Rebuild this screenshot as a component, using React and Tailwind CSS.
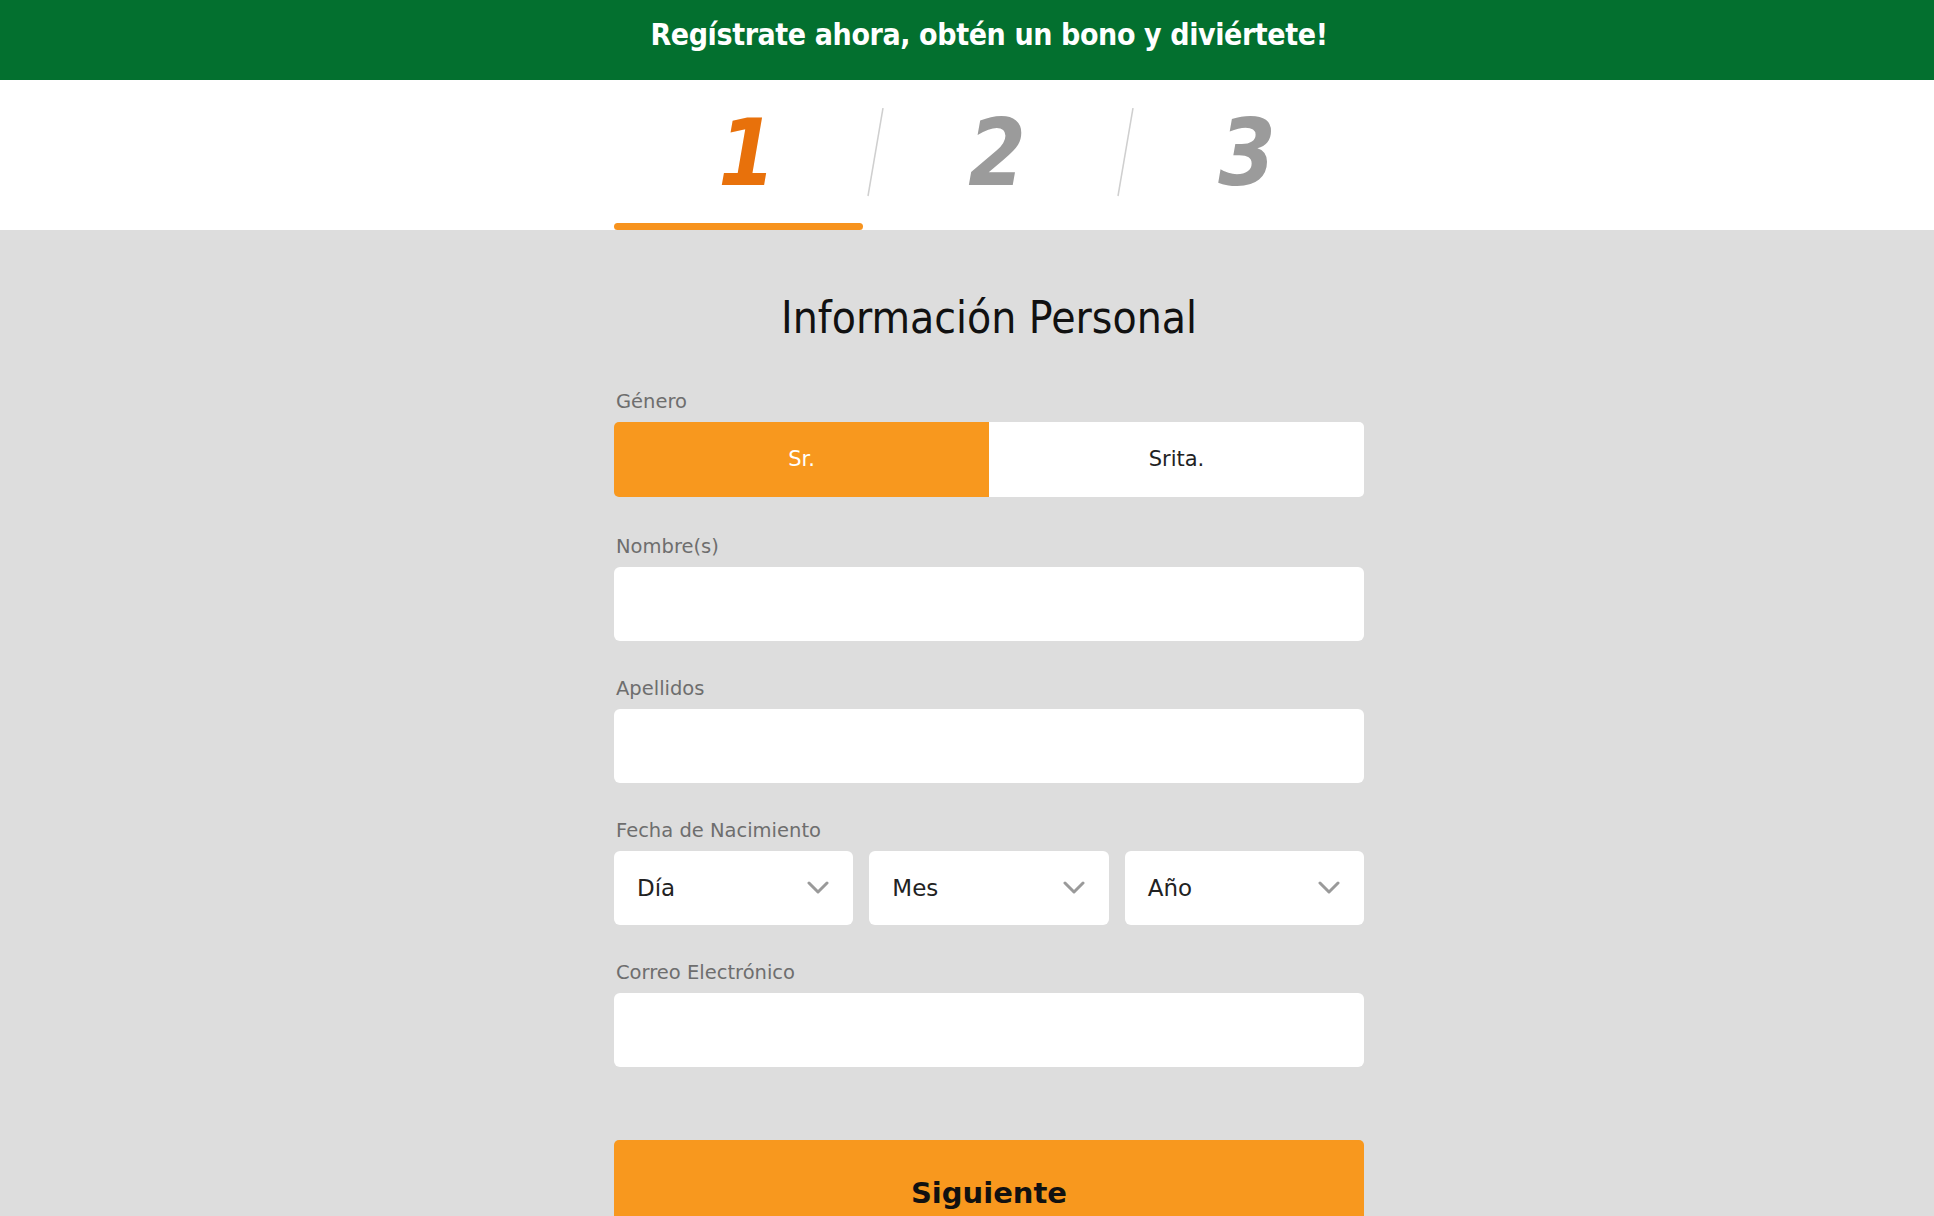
import React from 'react';

const labelCls = "block pl-[2px] text-[19.5px] leading-[24px] text-[#6e6e6e] mb-[8px] font-['DejaVu_Sans',sans-serif]";

function Chevron() {
  return (
    <svg width="22" height="14" viewBox="0 0 22 14" fill="none">
      <polyline points="2,2 11,11 20,2" stroke="#9a9a9a" strokeWidth="3" strokeLinecap="round" strokeLinejoin="round" />
    </svg>
  );
}

function Divider() {
  return (
    <svg className="absolute left-[250px] top-0" width="22" height="90" viewBox="0 0 22 90">
      <line x1="19" y1="0" x2="4" y2="88" stroke="#cfcfcf" strokeWidth="1.5" />
    </svg>
  );
}

function Field({ label, mt = 'mt-[36px]' }) {
  return (
    <div className={mt}>
      <label className={labelCls}>{label}</label>
      <input type="text" className="w-full h-[74px] bg-white rounded-[6px] outline-none px-[23px]" />
    </div>
  );
}

function Select({ text }) {
  return (
    <div className="flex-1 h-[74px] bg-white rounded-[6px] flex items-center justify-between pl-[23px] pr-[24px]">
      <span className="text-[23px] text-[#222] font-['DejaVu_Sans',sans-serif]">{text}</span>
      <Chevron />
    </div>
  );
}

export default function App() {
  const steps = ['1', '2', '3'];
  return (
    <div className="min-h-screen bg-[#dddddd]">
      <div className="h-[80px] bg-[#03702f] pl-[44px] pt-[18px]">
        <p className="text-center text-white font-bold text-[30px] leading-[34px] tracking-[-0.4px] font-['DejaVu_Sans_Condensed','DejaVu_Sans',sans-serif]">
          Regístrate ahora, obtén un bono y diviértete!
        </p>
      </div>

      <div className="bg-white h-[150px] pl-[44px]">
        <div className="w-[750px] mx-auto h-full flex flex-col">
          <div className="flex pt-[28px]">
            {steps.map((s, i) => (
              <div key={s} className="relative w-[250px] flex justify-center pl-[16px]">
                <span className={`text-[92px] leading-[92px] font-bold italic font-['DejaVu_Sans_Condensed','DejaVu_Sans',sans-serif] ${i === 0 ? 'text-[#e8710b]' : 'text-[#9b9b9b]'}`}>
                  {s}
                </span>
                {i < 2 && <Divider />}
              </div>
            ))}
          </div>
          <div className="mt-auto h-[7px] w-[249px] rounded-full bg-[#f7931e]" />
        </div>
      </div>

      <div className="pl-[44px] pb-[60px]">
        <div className="w-[750px] mx-auto">
          <h1 className="mt-[62px] text-center text-[44px] leading-[52px] text-[#111] font-normal font-['DejaVu_Sans_Condensed','DejaVu_Sans',sans-serif]">
            Información Personal
          </h1>

          <div className="mt-[46px]">
            <label className={labelCls}>Género</label>
            <div className="flex h-[75px] rounded-[5px] overflow-hidden">
              <button className="flex-1 bg-[#f8981e] text-white text-[21px] font-['DejaVu_Sans',sans-serif]">Sr.</button>
              <button className="flex-1 bg-white text-[#222] text-[21px] font-['DejaVu_Sans',sans-serif]">Srita.</button>
            </div>
          </div>

          <Field label="Nombre(s)" mt="mt-[38px]" />
          <Field label="Apellidos" />

          <div className="mt-[36px]">
            <label className={labelCls}>Fecha de Nacimiento</label>
            <div className="flex gap-[16px]">
              <Select text="Día" />
              <Select text="Mes" />
              <Select text="Año" />
            </div>
          </div>

          <Field label="Correo Electrónico" />

          <button className="mt-[73px] w-full h-[108px] bg-[#f8981e] rounded-[5px] text-[29px] font-bold text-[#111] font-['DejaVu_Sans',sans-serif]">
            Siguiente
          </button>
        </div>
      </div>
    </div>
  );
}
